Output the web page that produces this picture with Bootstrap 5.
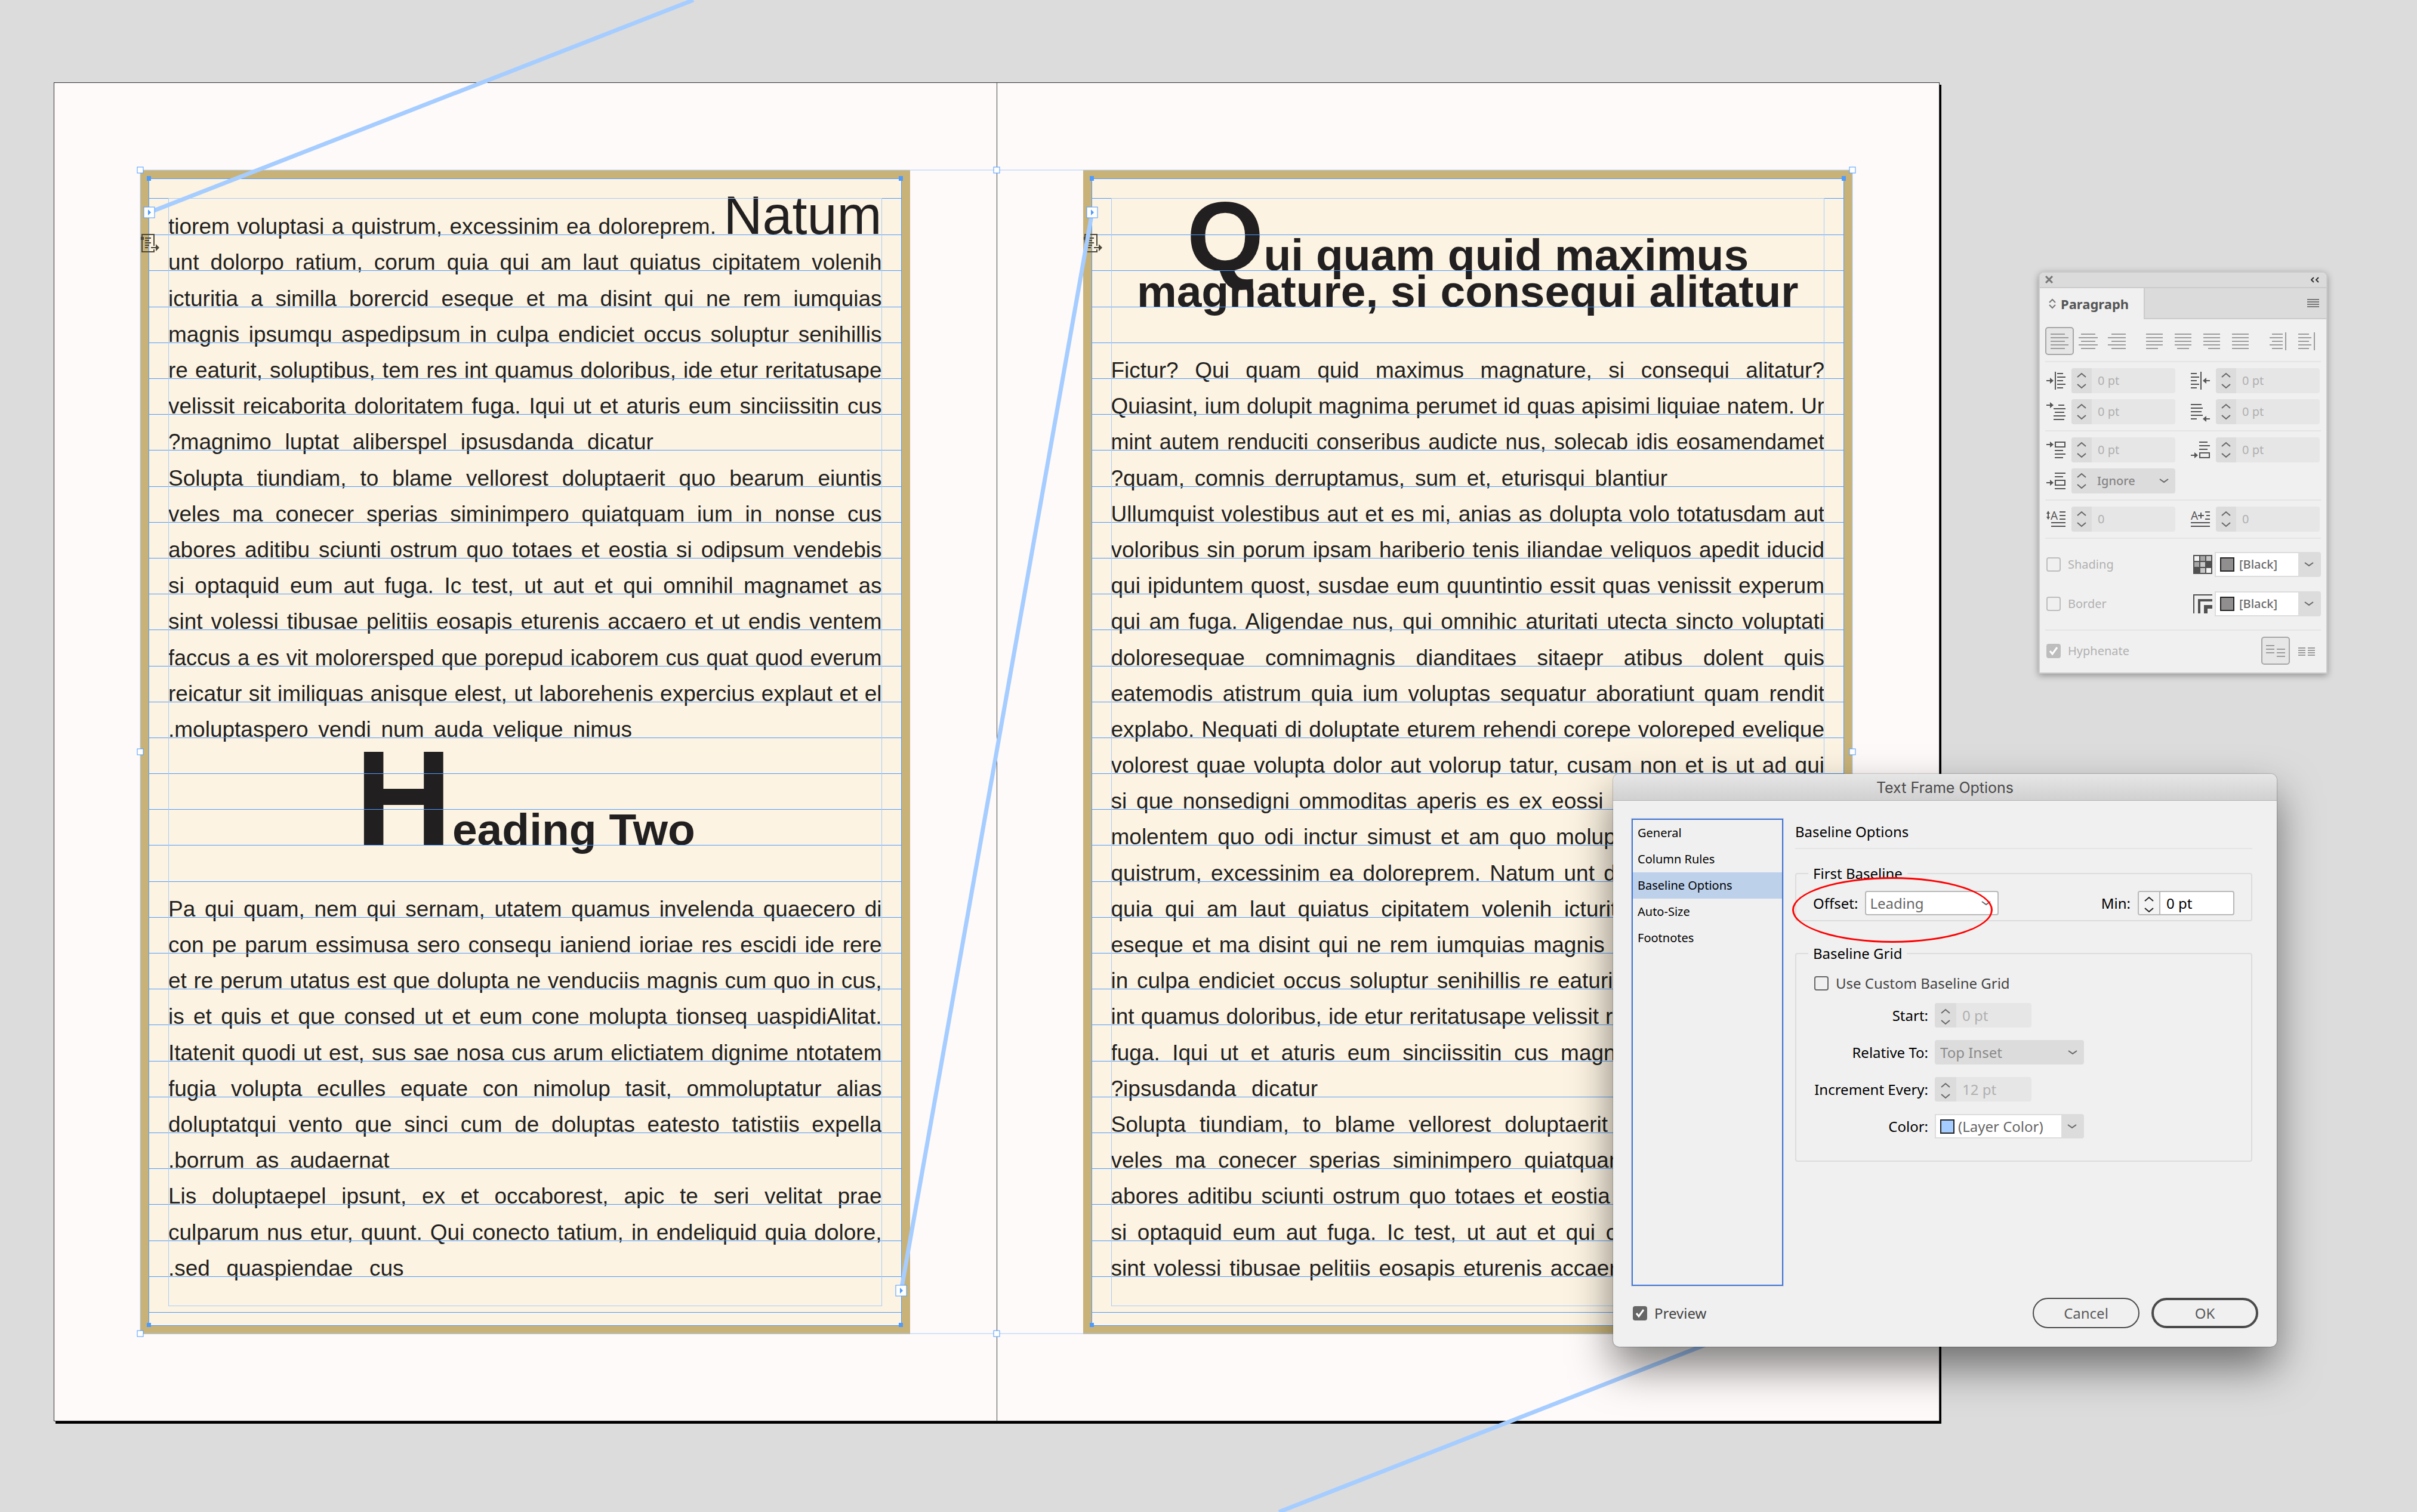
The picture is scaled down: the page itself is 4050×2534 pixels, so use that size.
<!DOCTYPE html>
<html lang="en">
<head>
<meta charset="utf-8">
<meta name="viewport" content="width=device-width, initial-scale=1">
<title>Text Frame Options</title>
<link href="https://cdn.jsdelivr.net/npm/bootstrap@5.3.0/dist/css/bootstrap.min.css" rel="stylesheet">
<style>
:root{--guide:#4d9bff;--guide-soft:#a6cdff;--ink:#221f20;--chev:url("data:image/svg+xml,%3Csvg xmlns='http://www.w3.org/2000/svg' viewBox='0 0 16 16'%3E%3Cpath d='M1 5l7 5 7-5' fill='none' stroke='%23666' stroke-width='2'/%3E%3C/svg%3E")}
body{background:#dcdcdc;font-family:"Noto Sans",sans-serif}
button,input,select{font-family:inherit}
.workspace{min-height:100vh;padding:138px 800px 150px 90px}
/* document spread */
.spread{background:#fffafa;border:1px solid #333;box-shadow:3px 4px 0 #000}
.sheet{flex:1 1 0;min-width:0;padding:146px 145px 145px 144px}
.sheet + .sheet{border-left:1px solid #444}
.textframe{border:15px solid #c8b278;background:#fcf3e2;padding:33px 0 22px;color:var(--ink);font-family:"Liberation Sans",Arial,sans-serif}
.textframe::before{content:"";position:absolute;inset:-1px;border:1px solid var(--guide);z-index:2}
.textframe::after{content:"";position:absolute;inset:32px;border:1px solid var(--guide-soft);z-index:2}
.lines{display:grid;grid-template-rows:repeat(31,minmax(0,1fr));height:1866px;margin:0}
.lines::before{content:"";position:absolute;top:32px;left:0;right:0;border-top:1px solid var(--guide)}
.ln{position:relative;display:grid;grid-template:minmax(0,1fr) / minmax(0,1fr);align-items:end;padding:0 32px;font-size:37px;line-height:26px;white-space:nowrap}
.ln > *{text-align:justify;text-align-last:justify;margin:0;font-size:37px;line-height:26px;font-weight:400}
.ln > .tight{font-size:36px}
.ln::after{content:"";position:absolute;left:0;right:0;bottom:-1px;border-bottom:1px solid var(--guide);z-index:1}
.ln > .heading{text-align:center;text-align-last:center;font-weight:700;font-size:75px;line-height:52px}
.cap-natum,.cap-q,.cap-h{line-height:0}
.cap-natum{font-size:90px}.cap-q{font-size:166px}.cap-h{font-size:226px}
.overlay{position:absolute;inset:0;width:100%;height:100%;z-index:3;overflow:hidden}
.thread{stroke:var(--guide-soft);stroke-width:7}
/* windows */
.panel{position:absolute;top:455px;right:150px;width:484px;background:#f0f0f0;border:2px solid #cbcbcb;border-radius:9px 9px 0 0;box-shadow:0 3px 12px rgba(0,0,0,.35);z-index:4;font-size:20px;line-height:26px;color:#b0b0b0;overflow:hidden}
.strip{height:24px;background:#dbdbdb;padding:0 12px 0 9px}
.tabs{background:#dbdbdb;border-top:2px solid #cbcbcb;height:54px}
.tab-on{background:#f0f0f0;border:0;border-right:2px solid #cbcbcb;width:176px;color:#555;font-size:22px;font-weight:700;padding:0 0 0 15px}
.tab-rest{border-bottom:2px solid #cbcbcb}
.flat{background:none;border:0;padding:0}
.panel-body{padding:13px 9px 13px}
.tool{width:48px;height:47px;padding:0;background:none;border:2px solid transparent;border-radius:5px;color:#9c9c9c}
.tool.on{background:#e6e6e6;border-color:#a6a6a6}
.rule{border-top:2px solid #e4e4e4;margin:10px 0}
.fields{display:grid;grid-template-columns:32px 174px 48px 174px;gap:10px;padding-left:2px;color:#555}
.fields svg{flex:none;overflow:visible}
.fields > :nth-child(4n+3){padding-left:16px}
.spin{height:42px;border-radius:4px;background:#e6e6e6;overflow:hidden}
.spin.ignore{background:#dcdcdc}
.spin.ignore .pick{color:#858585;font-weight:500}
.step{width:34px;flex:none;border:0;padding:0;background:#dcdcdc;color:#666}
.spin input{border:0;background:none;width:100%;min-width:0;padding:0 10px;color:#b0b0b0}
.pick{appearance:none;border:0;width:100%;min-width:0;padding:0 40px 0 9px;background:var(--chev) right 11px center/16px no-repeat;opacity:1}
.swatch-rows{display:grid;gap:24px;padding:12px 0}
.swatch-pick{border:2px solid #dcdcdc;background:#fff;height:42px;border-radius:0 4px 4px 0;padding-left:7px}
.panel .swatch-pick{width:178px}
.swatch-pick .pick{background:var(--chev) right 10px center/16px no-repeat,linear-gradient(#dcdcdc,#dcdcdc) right/36px 100% no-repeat;color:#6a6a6a;font-weight:500;padding-left:8px}
.chip{width:24px;height:24px;flex:none;border:2px solid #222;background:#918e8f}
.tick{appearance:none;width:24px;height:24px;flex:none;margin:0;border:2px solid #bdbdbd;border-radius:4px;background:transparent}
.tick:checked{border-color:#bdbdbd;background:#bdbdbd url("data:image/svg+xml,%3Csvg xmlns='http://www.w3.org/2000/svg' viewBox='0 0 20 20'%3E%3Cpath d='M4 10l4 5 8-11' fill='none' stroke='%23fff' stroke-width='3'/%3E%3C/svg%3E") center/20px}
.panel .tick{margin-left:2px}
.dlg{position:absolute;top:1297px;right:235px;width:1112px;background:#f0f0f0;border-radius:10px;box-shadow:0 0 2px rgba(0,0,0,.6),0 34px 70px rgba(0,0,0,.5);z-index:5;font-size:24px;line-height:34px;color:#000}
.dlg-title{height:45px;border-radius:10px 10px 0 0;border-bottom:1px solid #b4b4b4;background:linear-gradient(#e6e6e6,#d0d0d0);font-family:Inter,sans-serif;font-size:25px;line-height:34px;padding-top:6px;color:#4a4a4a}
.dlg-body{padding:30px 41px 0 31px;gap:20px}
.cats{width:254px;height:783px;border:2px solid #3f76dc;border-radius:0;outline:1px solid #d4d4d4;background:#f0f0f0}
.cats a{height:44px;padding:0 8px;font-size:20px;color:#000;text-decoration:none}
.cats a.on{background:#bdd1eb}
.dlg h2{font-size:24px;line-height:34px;font-weight:400;margin:5px 0 10px}
.dlg fieldset{border:2px solid #dcdcdc;border-radius:4px;padding:0 28px}
.dlg legend{float:none;width:auto;font-size:24px;line-height:34px;margin:0 0 0 -8px;padding:0 8px}
.dlg .group-grid{margin-top:37px;padding-bottom:37px}
.dlg .spin{width:162px;height:41px}
.dlg .step{width:36px}
.dlg .box{background:#fff;border:2px solid #b8b8b8}
.dlg .box .step{background:#f4f4f4;border-right:2px solid #b8b8b8;color:#222}
.dlg .box input{color:#000}
.w-offset{width:224px;height:41px;border-radius:4px;margin-left:12px}
.w-offset .pick{color:#666;padding-left:6px}
.gridform{display:grid;grid-template-columns:193px 250px;column-gap:11px;row-gap:21px;align-items:center;padding-top:16px}
.gridform > label{text-align:right;white-space:nowrap}
.gridform .spin.wide{width:250px;background:#dcdcdc}
.gridform .wide .pick{color:#8a8a8a}
.dlg .swatch-pick{height:41px}
.dlg .chip{background:#a6cdff}
.dlg .swatch-pick .pick{font-weight:400;color:#666;padding-left:6px}
.dlg .tick{border-color:#666}
.dlg .tick:checked{background-color:#666}
.group-grid .tick{margin-left:2px}
.soft-label{color:#444;margin-left:12px}
.dlg-foot{padding:20px 31px 31px 33px}
.pill{width:179px;height:51px;border:2px solid #4a4a4a;border-radius:26px;background:none;color:#5a5a5a}
.pill.main{border-width:4px}
.mark-ring{position:absolute;left:300px;top:173px;width:336px;height:110px;border:3px solid #f00;border-radius:50%;pointer-events:none}
</style>
<script src="https://cdn.jsdelivr.net/npm/bootstrap@5.3.0/dist/js/bootstrap.bundle.min.js" defer></script>
</head>
<body>
<svg class="d-none">
  <defs>
    <symbol id="updown" viewBox="0 0 16 30"><path d="M1 9l7-6 7 6M1 21l7 6 7-6" fill="none" stroke="currentColor" stroke-width="2"/></symbol>
    <g id="arrowR"><path d="M0 0h7" stroke="currentColor" stroke-width="2"/><path d="M6-5l6 5-6 5z" fill="currentColor"/></g>
    <g id="arrowL"><path d="M12 0H5" stroke="currentColor" stroke-width="2"/><path d="M6-5L0 0l6 5z" fill="currentColor"/></g>
    <g id="grip"><rect x="-5" y="-5" width="10" height="10" fill="#fff" stroke="#4d9bff" stroke-width="1"/></g>
    <g id="port"><rect x="-9" y="-9" width="18" height="18" fill="#fff" stroke="#4d9bff" stroke-width="1"/><path d="M-2-5L3 0l-5 5z" fill="#4d9bff"/></g>
    <g id="flow" stroke="#4b4639" stroke-width="2" fill="none"><path d="M22 20V1H2v29h20v-4"/><path d="M7 7h10M7 11h7M7 15h10M7 19h7M7 23h5" /><path d="M0 5h5v5H0z" fill="#4b4639" stroke="none"/><path d="M17 22h8v-5l6 6-6 6v-5h-8z" fill="#4b4639" stroke="none"/></g>
  </defs>
</svg>

<div class="workspace position-relative overflow-hidden">
  <main class="spread d-flex">
    <section class="sheet">
      <article class="textframe position-relative">
        <div class="lines">
          <div class="ln"><p>tiorem voluptasi a quistrum, excessinim ea doloreprem. <span class="cap-natum">Natum</span></p></div>
          <div class="ln"><p>unt dolorpo ratium, corum quia qui am laut quiatus cipitatem volenih</p></div>
          <div class="ln"><p>icturitia a similla borercid eseque et ma disint qui ne rem iumquias</p></div>
          <div class="ln"><p>magnis ipsumqu aspedipsum in culpa endiciet occus soluptur senihillis</p></div>
          <div class="ln"><p>re eaturit, soluptibus, tem res int quamus doloribus, ide etur reritatusape</p></div>
          <div class="ln"><p>velissit reicaborita doloritatem fuga. Iqui ut et aturis eum sinciissitin cus</p></div>
          <div class="ln"><p style="width:68%">?magnimo luptat aliberspel ipsusdanda dicatur</p></div>
          <div class="ln"><p>Solupta tiundiam, to blame vellorest doluptaerit quo bearum eiuntis</p></div>
          <div class="ln"><p>veles ma conecer sperias siminimpero quiatquam ium in nonse cus</p></div>
          <div class="ln"><p>abores aditibu sciunti ostrum quo totaes et eostia si odipsum vendebis</p></div>
          <div class="ln"><p>si optaquid eum aut fuga. Ic test, ut aut et qui omnihil magnamet as</p></div>
          <div class="ln"><p>sint volessi tibusae pelitiis eosapis eturenis accaero et ut endis ventem</p></div>
          <div class="ln"><p class="tight">faccus a es vit molorersped que porepud icaborem cus quat quod everum</p></div>
          <div class="ln"><p>reicatur sit imiliquas anisque elest, ut laborehenis expercius explaut et el</p></div>
          <div class="ln"><p style="width:65%">.moluptaspero vendi num auda velique nimus</p></div>
          <div class="ln"></div>
          <div class="ln"></div>
          <div class="ln"><h2 class="heading"><span class="cap-h">H</span>eading Two</h2></div>
          <div class="ln"></div>
          <div class="ln"><p>Pa qui quam, nem qui sernam, utatem quamus invelenda quaecero di</p></div>
          <div class="ln"><p>con pe parum essimusa sero consequ ianiend ioriae res escidi ide rere</p></div>
          <div class="ln"><p>et re perum utatus est que dolupta ne venduciis magnis cum quo in cus,</p></div>
          <div class="ln"><p>is et quis et que consed ut et eum cone molupta tionseq uaspidiAlitat.</p></div>
          <div class="ln"><p>Itatenit quodi ut est, sus sae nosa cus arum elictiatem dignime ntotatem</p></div>
          <div class="ln"><p>fugia volupta eculles equate con nimolup tasit, ommoluptatur alias</p></div>
          <div class="ln"><p>doluptatqui vento que sinci cum de doluptas eatesto tatistiis expella</p></div>
          <div class="ln"><p style="width:31%">.borrum as audaernat</p></div>
          <div class="ln"><p>Lis doluptaepel ipsunt, ex et occaborest, apic te seri velitat prae</p></div>
          <div class="ln"><p>culparum nus etur, quunt. Qui conecto tatium, in endeliquid quia dolore,</p></div>
          <div class="ln"><p style="width:33%">.sed quaspiendae cus</p></div>
          <div class="ln"></div>
        </div>
      </article>
    </section>
    <section class="sheet">
      <article class="textframe position-relative">
        <div class="lines">
          <div class="ln"></div>
          <div class="ln"><h1 class="heading"><span class="cap-q">Q</span>ui quam quid maximus</h1></div>
          <div class="ln"><h1 class="heading">magnature, si consequi alitatur</h1></div>
          <div class="ln"></div>
          <div class="ln"><p>Fictur? Qui quam quid maximus magnature, si consequi alitatur?</p></div>
          <div class="ln"><p>Quiasint, ium dolupit magnima perumet id quas apisimi liquiae natem. Ur</p></div>
          <div class="ln"><p class="tight">mint autem renduciti conseribus audicte nus, solecab idis eosamendamet</p></div>
          <div class="ln"><p style="width:78%">?quam, comnis derruptamus, sum et, eturisqui blantiur</p></div>
          <div class="ln"><p>Ullumquist volestibus aut et es mi, anias as dolupta volo totatusdam aut</p></div>
          <div class="ln"><p>voloribus sin porum ipsam hariberio tenis iliandae veliquos apedit iducid</p></div>
          <div class="ln"><p>qui ipiduntem quost, susdae eum quuntintio essit quas venissit experum</p></div>
          <div class="ln"><p>qui am fuga. Aligendae nus, qui omnihic aturitati utecta sincto voluptati</p></div>
          <div class="ln"><p>doloresequae comnimagnis dianditaes sitaepr atibus dolent quis</p></div>
          <div class="ln"><p>eatemodis atistrum quia ium voluptas sequatur aboratiunt quam rendit</p></div>
          <div class="ln"><p>explabo. Nequati di doluptate eturem rehendi corepe voloreped evelique</p></div>
          <div class="ln"><p>volorest quae volupta dolor aut volorup tatur, cusam non et is ut ad qui</p></div>
          <div class="ln"><p>si que nonsedigni ommoditas aperis es ex eossi omniatur sequiam dit</p></div>
          <div class="ln"><p>molentem quo odi inctur simust et am quo molupta tiorem voluptasi a</p></div>
          <div class="ln"><p>quistrum, excessinim ea doloreprem. Natum unt dolorpo ratium, corum</p></div>
          <div class="ln"><p>quia qui am laut quiatus cipitatem volenih icturitia a similla borercid</p></div>
          <div class="ln"><p>eseque et ma disint qui ne rem iumquias magnis ipsumqu aspedipsum</p></div>
          <div class="ln"><p>in culpa endiciet occus soluptur senihillis re eaturit, soluptibus, tem res</p></div>
          <div class="ln"><p>int quamus doloribus, ide etur reritatusape velissit reicaborita doloritatem</p></div>
          <div class="ln"><p>fuga. Iqui ut et aturis eum sinciissitin cus magnimo luptat aliberspel</p></div>
          <div class="ln"><p style="width:29%">?ipsusdanda dicatur</p></div>
          <div class="ln"><p>Solupta tiundiam, to blame vellorest doluptaerit quo bearum eiuntis</p></div>
          <div class="ln"><p>veles ma conecer sperias siminimpero quiatquam ium in nonse cus</p></div>
          <div class="ln"><p>abores aditibu sciunti ostrum quo totaes et eostia si odipsum vendebis</p></div>
          <div class="ln"><p>si optaquid eum aut fuga. Ic test, ut aut et qui omnihil magnamet as</p></div>
          <div class="ln"><p>sint volessi tibusae pelitiis eosapis eturenis accaero et ut endis ventem</p></div>
          <div class="ln"></div>
        </div>
      </article>
    </section>
  </main>

  <!-- selection bounds, text threads and frame ports -->
  <svg class="overlay" aria-hidden="true">
    <rect x="235" y="285" width="2869" height="1950" fill="none" stroke="#a6cdff" stroke-width="1"/>
    <g fill="#4d9bff"><path d="M246 295h7v8h-7zM1506 295h7v8h-7zM1826 295h7v8h-7zM3086 295h7v8h-7zM246 2217h7v7h-7zM1506 2217h7v7h-7zM1826 2217h7v7h-7z"/></g>
    <use href="#flow" x="236" y="392"/><use href="#flow" x="1816" y="392"/>
    <line class="thread" x1="250" y1="356" x2="1162" y2="0"/>
    <line class="thread" x1="1830" y1="356" x2="1510" y2="2163"/>
    <line class="thread" x1="3089" y1="2163" x2="2143" y2="2534"/>
    <use href="#port" x="250" y="356"/><use href="#port" x="1830" y="356"/><use href="#port" x="1510" y="2163"/>
    <use href="#grip" x="235" y="285"/><use href="#grip" x="1670" y="285"/><use href="#grip" x="3104" y="285"/>
    <use href="#grip" x="235" y="1260"/><use href="#grip" x="3104" y="1260"/>
    <use href="#grip" x="235" y="2235"/><use href="#grip" x="1670" y="2235"/>
  </svg>

  <aside class="panel">
    <div class="strip d-flex justify-content-between align-items-center">
      <button class="flat d-flex" aria-label="Close"><svg width="14" height="14" viewBox="0 0 14 14"><path d="M1 1l11 11M12 1L1 12" stroke="#777" stroke-width="3"/></svg></button>
      <button class="flat d-flex" aria-label="Collapse"><svg width="14" height="10" viewBox="0 0 14 10"><path d="M5 1L1 5l4 4M13 1L9 5l4 4" fill="none" stroke="#333" stroke-width="2"/></svg></button>
    </div>
    <div class="tabs d-flex">
      <button class="tab-on d-flex align-items-center gap-2"><svg width="12" height="18" viewBox="0 0 12 18"><path d="M1 7l5-5 5 5M1 11l5 5 5-5" fill="none" stroke="#777" stroke-width="2"/></svg>Paragraph</button>
      <div class="tab-rest flex-grow-1 d-flex justify-content-end align-items-center pe-2">
        <button class="flat d-flex me-1" aria-label="Panel menu"><svg width="20" height="16" viewBox="0 0 20 16"><path d="M0 2h20M0 6h20M0 10h20M0 14h20" stroke="#777" stroke-width="2"/></svg></button>
      </div>
    </div>
    <div class="panel-body">
      <div class="d-flex justify-content-between">
        <div class="d-flex">
          <button class="tool on" aria-label="Align left"><svg width="32" height="30" viewBox="0 0 32 30" stroke="currentColor" stroke-width="2"><path d="M1 3h24M1 9h30M1 15h24M1 21h30M1 27h24"/></svg></button>
          <button class="tool" aria-label="Align center"><svg width="32" height="30" viewBox="0 0 32 30" stroke="currentColor" stroke-width="2"><path d="M4 3h24M0 9h32M4 15h24M0 21h32M4 27h24"/></svg></button>
          <button class="tool" aria-label="Align right"><svg width="32" height="30" viewBox="0 0 32 30" stroke="currentColor" stroke-width="2"><path d="M7 3h24M1 9h30M7 15h24M1 21h30M7 27h24"/></svg></button>
        </div>
        <div class="d-flex">
          <button class="tool" aria-label="Justify, last line left"><svg width="28" height="30" viewBox="0 0 28 30" stroke="currentColor" stroke-width="2"><path d="M0 3h28M0 9h28M0 15h28M0 21h28M0 27h20"/></svg></button>
          <button class="tool" aria-label="Justify, last line centered"><svg width="28" height="30" viewBox="0 0 28 30" stroke="currentColor" stroke-width="2"><path d="M0 3h28M0 9h28M0 15h28M0 21h28M4 27h20"/></svg></button>
          <button class="tool" aria-label="Justify, last line right"><svg width="28" height="30" viewBox="0 0 28 30" stroke="currentColor" stroke-width="2"><path d="M0 3h28M0 9h28M0 15h28M0 21h28M8 27h20"/></svg></button>
          <button class="tool" aria-label="Justify all lines"><svg width="28" height="30" viewBox="0 0 28 30" stroke="currentColor" stroke-width="2"><path d="M0 3h28M0 9h28M0 15h28M0 21h28M0 27h28"/></svg></button>
        </div>
        <div class="d-flex">
          <button class="tool" aria-label="Align towards spine"><svg width="28" height="30" viewBox="0 0 28 30" stroke="currentColor" stroke-width="2"><path d="M4 3h18M0 9h22M4 15h18M0 21h22M4 27h18M27 0v30"/></svg></button>
          <button class="tool" aria-label="Align away from spine"><svg width="28" height="30" viewBox="0 0 28 30" stroke="currentColor" stroke-width="2"><path d="M0 3h18M0 9h22M0 15h18M0 21h22M0 27h18M27 0v30"/></svg></button>
        </div>
      </div>
      <div class="rule"></div>
      <div class="fields">
        <label for="li" class="d-flex align-items-center"><svg width="32" height="30" viewBox="0 0 32 30"><use href="#arrowR" y="15"/><path d="M15 0v30M18 3h10M18 9h14M18 15h10M18 21h14M18 27h10" stroke="currentColor" stroke-width="2"/></svg></label>
        <div class="spin d-flex"><button class="step" disabled aria-label="Step left indent"><svg width="16" height="30"><use href="#updown"/></svg></button><input id="li" value="0 pt" disabled></div>
        <label for="ri" class="d-flex align-items-center"><svg width="32" height="30" viewBox="0 0 32 30"><use href="#arrowL" x="20" y="15"/><path d="M17 0v30M0 3h10M0 9h14M0 15h10M0 21h14M0 27h10" stroke="currentColor" stroke-width="2"/></svg></label>
        <div class="spin d-flex"><button class="step" disabled aria-label="Step right indent"><svg width="16" height="30"><use href="#updown"/></svg></button><input id="ri" value="0 pt" disabled></div>
        <label for="fi" class="d-flex align-items-center"><svg width="32" height="34" viewBox="0 -4 32 34"><use href="#arrowR" y="2"/><path d="M20 2h10M12 8h20M14 14h16M12 20h20M12 26h18" stroke="currentColor" stroke-width="2"/></svg></label>
        <div class="spin d-flex"><button class="step" disabled aria-label="Step first line indent"><svg width="16" height="30"><use href="#updown"/></svg></button><input id="fi" value="0 pt" disabled></div>
        <label for="la" class="d-flex align-items-center"><svg width="32" height="34" viewBox="0 -2 32 34"><use href="#arrowL" x="20" y="27"/><path d="M0 3h18M0 9h20M0 15h18M0 21h20M0 27h10" stroke="currentColor" stroke-width="2"/></svg></label>
        <div class="spin d-flex"><button class="step" disabled aria-label="Step last line indent"><svg width="16" height="30"><use href="#updown"/></svg></button><input id="la" value="0 pt" disabled></div>
      </div>
      <div class="rule"></div>
      <div class="fields">
        <label for="sb" class="d-flex align-items-center"><svg width="32" height="30" viewBox="0 0 32 30"><use href="#arrowR" y="6"/><path d="M15 2h16v8H15zM14 16h14M14 22h18M14 28h14" fill="none" stroke="currentColor" stroke-width="2"/></svg></label>
        <div class="spin d-flex"><button class="step" disabled aria-label="Step space before"><svg width="16" height="30"><use href="#updown"/></svg></button><input id="sb" value="0 pt" disabled></div>
        <label for="sa" class="d-flex align-items-center"><svg width="32" height="30" viewBox="0 0 32 30"><use href="#arrowR" y="24"/><path d="M15 20h16v8H15zM14 2h14M14 8h18M14 14h14" fill="none" stroke="currentColor" stroke-width="2"/></svg></label>
        <div class="spin d-flex"><button class="step" disabled aria-label="Step space after"><svg width="16" height="30"><use href="#updown"/></svg></button><input id="sa" value="0 pt" disabled></div>
        <label for="ss" class="d-flex align-items-center"><svg width="32" height="30" viewBox="0 0 32 30"><use href="#arrowR" y="18"/><path d="M15 14h16v8H15zM14 2h18M14 8h14M14 28h18" fill="none" stroke="currentColor" stroke-width="2"/></svg></label>
        <div class="spin ignore d-flex"><button class="step" disabled aria-label="Step space between"><svg width="16" height="30"><use href="#updown"/></svg></button><select id="ss" class="pick" disabled><option>Ignore</option></select></div>
      </div>
      <div class="rule"></div>
      <div class="fields">
        <label for="dl" class="d-flex align-items-center"><svg width="32" height="30" viewBox="0 0 32 30"><path d="M3 4v9M22 3h10M22 9h10M22 15h10M8 21h24M8 27h24" stroke="currentColor" stroke-width="2"/><path d="M3 1l3 5H0zM3 16l3-5H0z" fill="currentColor"/><text x="7" y="16" font-size="19" fill="currentColor">A</text></svg></label>
        <div class="spin d-flex"><button class="step" disabled aria-label="Step drop cap lines"><svg width="16" height="30"><use href="#updown"/></svg></button><input id="dl" value="0" disabled></div>
        <label for="dc" class="d-flex align-items-center"><svg width="32" height="30" viewBox="0 0 32 30"><path d="M24 3h8M26 9h6M24 15h8M0 21h32M0 27h32M12 9h10M17 4v10" stroke="currentColor" stroke-width="2"/><text x="0" y="16" font-size="19" fill="currentColor">A</text></svg></label>
        <div class="spin d-flex"><button class="step" disabled aria-label="Step drop cap characters"><svg width="16" height="30"><use href="#updown"/></svg></button><input id="dc" value="0" disabled></div>
      </div>
      <div class="rule"></div>
      <div class="swatch-rows">
        <div class="d-flex align-items-center">
          <input class="tick" type="checkbox" id="shade" disabled><label for="shade" class="ps-2 ms-1 flex-grow-1">Shading</label>
          <svg width="32" height="32" viewBox="0 0 32 32"><path d="M0 0h32v32H0z" fill="#505050"/><path d="M2 2h8v8H2zM22 22h8v8h-8z" fill="#f4f4f4"/><path d="M12 2h8v8h-8zM2 12h8v8H2z" fill="#a6a6a6"/><path d="M22 2h8v8h-8zM12 12h8v8h-8zM12 22h8v8h-8z" fill="#c8c8c8"/></svg>
          <div class="swatch-pick d-flex align-items-center ms-1"><span class="chip"></span><select class="pick h-100" aria-label="Shading color" disabled><option>[Black]</option></select></div>
        </div>
        <div class="d-flex align-items-center">
          <input class="tick" type="checkbox" id="bord" disabled><label for="bord" class="ps-2 ms-1 flex-grow-1">Border</label>
          <svg width="32" height="32" viewBox="0 0 32 32" fill="none" stroke="#505050"><path d="M1 32V1h31" stroke-width="2"/><path d="M10 32V10h22" stroke-width="4"/><path d="M21 32V21h11" stroke-width="6"/></svg>
          <div class="swatch-pick d-flex align-items-center ms-1"><span class="chip"></span><select class="pick h-100" aria-label="Border color" disabled><option>[Black]</option></select></div>
        </div>
      </div>
      <div class="rule"></div>
      <div class="d-flex align-items-center">
        <input class="tick" type="checkbox" id="hyph" checked disabled><label for="hyph" class="ps-2 ms-1 flex-grow-1">Hyphenate</label>
        <button class="tool on me-1" aria-label="Do not align to baseline grid"><svg width="32" height="26" viewBox="0 0 32 26" stroke="currentColor" stroke-width="2"><path d="M0 4h14M0 10h14M0 16h14M18 10h14M18 16h14M18 22h14"/></svg></button>
        <button class="tool" aria-label="Align to baseline grid"><svg width="28" height="16" viewBox="0 0 28 16" stroke="currentColor" stroke-width="2"><path d="M0 2h12M0 6h12M0 10h12M0 14h12M16 2h12M16 6h12M16 10h12M16 14h12"/></svg></button>
      </div>
    </div>
  </aside>

  <section class="dlg">
    <header class="dlg-title text-center">Text Frame Options</header>
    <div class="dlg-body d-flex">
      <nav class="cats flex-shrink-0">
        <a class="d-flex align-items-center" href="#">General</a>
        <a class="d-flex align-items-center" href="#">Column Rules</a>
        <a class="d-flex align-items-center on" href="#">Baseline Options</a>
        <a class="d-flex align-items-center" href="#">Auto-Size</a>
        <a class="d-flex align-items-center" href="#">Footnotes</a>
      </nav>
      <div class="flex-grow-1">
        <h2>Baseline Options</h2>
        <div class="rule mt-0 mb-4"></div>
        <fieldset class="pb-2">
          <legend>First Baseline</legend>
          <div class="d-flex align-items-center pt-2 mt-1">
            <label for="off">Offset:</label>
            <div class="box w-offset d-flex"><select id="off" class="pick"><option>Leading</option></select></div>
            <label for="min" class="ms-auto me-2 pe-1">Min:</label>
            <div class="spin box d-flex"><button class="step" aria-label="Step minimum"><svg width="16" height="30"><use href="#updown"/></svg></button><input id="min" value="0 pt"></div>
          </div>
        </fieldset>
        <fieldset class="group-grid">
          <legend>Baseline Grid</legend>
          <div class="d-flex align-items-center pt-3"><input class="tick" type="checkbox" id="ucg"><label for="ucg" class="soft-label">Use Custom Baseline Grid</label></div>
          <div class="gridform">
            <label for="st">Start:</label>
            <div class="spin d-flex"><button class="step" disabled aria-label="Step start"><svg width="16" height="30"><use href="#updown"/></svg></button><input id="st" value="0 pt" disabled></div>
            <label for="rel">Relative To:</label>
            <div class="spin wide d-flex"><select id="rel" class="pick" disabled><option>Top Inset</option></select></div>
            <label for="inc">Increment Every:</label>
            <div class="spin d-flex"><button class="step" disabled aria-label="Step increment"><svg width="16" height="30"><use href="#updown"/></svg></button><input id="inc" value="12 pt" disabled></div>
            <label for="col">Color:</label>
            <div class="swatch-pick d-flex align-items-center"><span class="chip"></span><select id="col" class="pick h-100"><option>(Layer Color)</option></select></div>
          </div>
        </fieldset>
      </div>
    </div>
    <footer class="dlg-foot d-flex align-items-center">
      <input class="tick" type="checkbox" id="prev" checked><label for="prev" class="soft-label">Preview</label>
      <button class="pill ms-auto me-3">Cancel</button>
      <button class="pill main ms-1">OK</button>
    </footer>
    <div class="mark-ring"></div>
  </section>
</div>
</body>
</html>
